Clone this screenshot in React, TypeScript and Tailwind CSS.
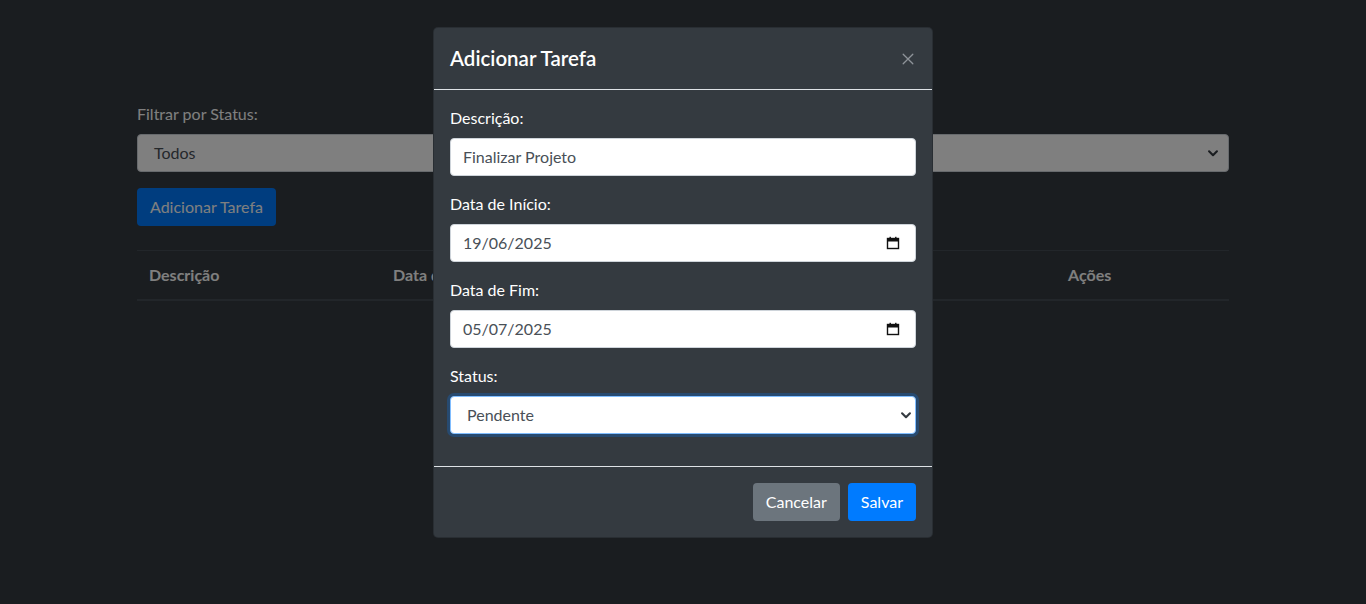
import React from "react";

const font = { fontFamily: '"Segoe UI", Lato, "Noto Sans", sans-serif' };

function Chevron({ className }: { className?: string }) {
  return (
    <svg viewBox="0 0 16 16" className={className} fill="none" stroke="currentColor" strokeWidth="2.4" strokeLinecap="round" strokeLinejoin="round">
      <path d="M3.5 6 L8 10.5 L12.5 6" />
    </svg>
  );
}

function Calendar() {
  return (
    <svg viewBox="0 0 14 14" className="w-[14px] h-[14px]" fill="none">
      <rect x="1.5" y="2.5" width="11" height="10" stroke="#111" strokeWidth="1.4" />
      <rect x="1.5" y="2.5" width="11" height="3" fill="#111" />
      <rect x="3.5" y="0.8" width="1.4" height="2" fill="#111" />
      <rect x="9.1" y="0.8" width="1.4" height="2" fill="#111" />
    </svg>
  );
}

function Field({ label, children }: { label: string; children: React.ReactNode }) {
  return (
    <div className="mb-4">
      <div className="text-white text-[16px] leading-6 mb-2">{label}</div>
      {children}
    </div>
  );
}

function TextBox({ value, icon }: { value: string; icon?: boolean }) {
  return (
    <div className="h-[38px] bg-white border border-[#ced4da] rounded-[4px] px-3 flex items-center justify-between text-[#495057] text-[16px]">
      <span>{value}</span>
      {icon && <span className="mr-[3px] flex"><Calendar /></span>}
    </div>
  );
}

export default function App() {
  return (
    <div style={font} className="relative w-full h-[604px] overflow-hidden bg-[#343a40]">
      {/* Page */}
      <div className="w-[1092px] ml-[137px] pt-[102px]">
        <div className="text-white text-[16px] leading-6 mb-2">Filtrar por Status:</div>
        <div className="h-[38px] bg-white border border-[#ced4da] rounded-[4px] pl-4 pr-2 flex items-center justify-between text-[#495057] text-[16px]">
          <span>Todos</span>
          <Chevron className="w-[14px] h-[14px] text-[#343a40]" />
        </div>
        <button className="mt-4 h-[38px] px-[13px] rounded-[4px] bg-[#007bff] text-white text-[16px]">Adicionar Tarefa</button>
        <div className="mt-6 border-t border-b-2 border-[#454d55] h-[51px] flex items-center text-white font-bold text-[16px]">
          <div className="w-[244px] px-3">Descrição</div>
          <div className="w-[244px] px-3 whitespace-nowrap overflow-hidden">Data de Início</div>
          <div className="w-[243px] px-3 whitespace-nowrap overflow-hidden">Data de Fim</div>
          <div className="w-[188px] px-3">Status</div>
          <div className="px-3">Ações</div>
        </div>
      </div>

      {/* Backdrop */}
      <div className="absolute inset-0 bg-black/50" />

      {/* Modal */}
      <div className="absolute left-[433px] top-[27px] w-[500px] bg-[#343a40] border border-black/20 rounded-[5px]">
        <div className="flex items-center justify-between px-4 h-[62px] border-b border-[#dee2e6]">
          <div className="text-white font-semibold text-[20.5px] leading-[30px] -mt-[2px]">Adicionar Tarefa</div>
          <div className="text-[#8e9399] mr-[1px]">
            <svg viewBox="0 0 16 16" className="w-[14px] h-[14px]" stroke="currentColor" strokeWidth="1.5" strokeLinecap="round">
              <path d="M2.5 2.5 L13.5 13.5 M13.5 2.5 L2.5 13.5" />
            </svg>
          </div>
        </div>
        <div className="p-4">
          <Field label="Descrição:">
            <TextBox value="Finalizar Projeto" />
          </Field>
          <Field label="Data de Início:">
            <TextBox value="19/06/2025" icon />
          </Field>
          <Field label="Data de Fim:">
            <TextBox value="05/07/2025" icon />
          </Field>
          <Field label="Status:">
            <div className="h-[38px] bg-white border border-[#80bdff] shadow-[0_0_0_3px_rgba(0,123,255,0.25)] rounded-[4px] pl-4 pr-[2px] flex items-center justify-between text-[#495057] text-[16px]">
              <span>Pendente</span>
              <Chevron className="w-[14px] h-[14px] text-[#343a40]" />
            </div>
          </Field>
        </div>
        <div className="border-t border-[#dee2e6] px-4 py-4 flex justify-end gap-2">
          <button className="h-[38px] px-[13px] rounded-[4px] bg-[#6c757d] text-white text-[16px]">Cancelar</button>
          <button className="h-[38px] px-[13px] rounded-[4px] bg-[#007bff] text-white text-[16px]">Salvar</button>
        </div>
      </div>
    </div>
  );
}
